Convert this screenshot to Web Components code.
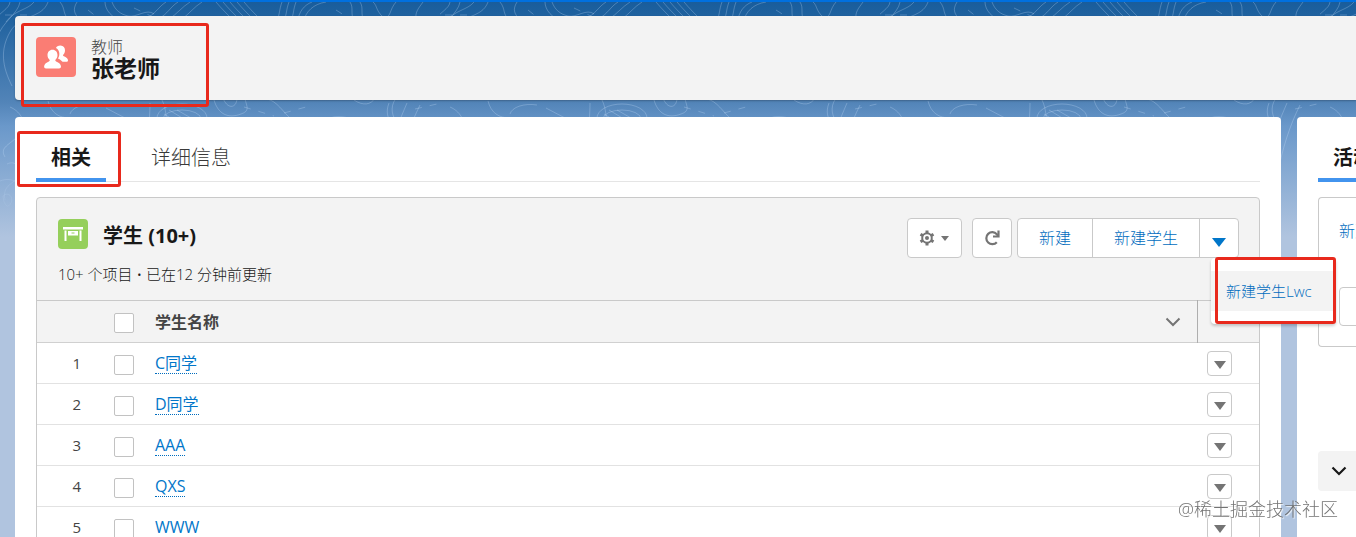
<!DOCTYPE html>
<html lang="zh-CN">
    <head>
        <meta charset="utf-8" />
        <meta name="viewport" content="width=device-width, initial-scale=1" />
        <title>张老师 | 教师</title>
        <style type="text/css">
            html,
            body {
                height: 100%;
                margin: 0;
                overflow: hidden;
            }
            body {
                color: #181818;
                font-family: "Open Sans", "Noto Sans CJK SC", sans-serif;
                font-size: 16px;
                line-height: 24px;
            }
        </style>
    </head>
    <body>
        <record-page>
            <record-header slot="header" type="教师" name="张老师"></record-header>
            <record-panel>
                <tab-bar slot="tabs">
                    <tab-item selected marked>相关</tab-item>
                    <tab-item>详细信息</tab-item>
                </tab-bar>
                <related-list>
                    <span slot="title">学生 (10+)</span>
                    <span slot="status">10+ 个项目 • 已在12 分钟前更新</span>
                    <list-actions slot="actions"></list-actions>
                    <student-table></student-table>
                </related-list>
            </record-panel>
            <record-panel slot="side" clipped>
                <tab-bar slot="tabs">
                    <tab-item selected>活动</tab-item>
                </tab-bar>
                <activity-box></activity-box>
            </record-panel>
        </record-page>

        <template id="page-template">
            <style>
                :host {
                    background: linear-gradient(#195d9c 0, #20629f 16px, #5284b8 100px, #6a98ca 124px, #b0c4df 235px);
                    border-top: 2px solid #0070e0;
                    box-sizing: border-box;
                    display: block;
                    height: 100%;
                    overflow: hidden;
                    padding: 14px 0 0 15px;
                    position: relative;
                }
                .texture {
                    height: 240px;
                    left: 0;
                    position: absolute;
                    top: 0;
                    width: 100%;
                }
                .content {
                    display: grid;
                    gap: 17px 16px;
                    grid-template-columns: minmax(0, 1fr) 59px;
                    position: relative;
                }
                .header {
                    grid-column: 1 / -1;
                }
                .watermark {
                    bottom: 16px;
                    color: rgba(100, 100, 100, 0.9);
                    font-size: 18px;
                    font-weight: 300;
                    pointer-events: none;
                    position: fixed;
                    right: 18px;
                    text-shadow: 1px 1px 1px #fff;
                }
            </style>
            <svg class="texture" aria-hidden="true">
                <defs>
                    <linearGradient id="fade" x2="0" y2="1">
                        <stop offset="0" stop-color="#fff" />
                        <stop offset=".6" stop-color="#fff" />
                        <stop offset="1" stop-color="#000" />
                    </linearGradient>
                    <mask id="mask"><rect width="100%" height="240" fill="url(#fade)" /></mask>
                    <pattern id="contours" width="440" height="240" patternUnits="userSpaceOnUse">
                        <g fill="none" stroke="#cfe4ff" stroke-opacity=".27">
                            <path d="M10 0C9 7 0 10-5 18M20 0C18 12 2 20-3 36M48 0C42 17 20 12 10 30C0 48 2 64 12 84M34 0C28 8 14 8 6 20" />
                            <path d="M60 0c6 7 2 13 10 18M77 0c-5 8-2 12 2 17M112 0c3 8 8 12 16 14s19-8 26-2M105 0c0 8 7 16 17 19" />
                            <path d="M166 0c-8 5-10 12-21 17M178 0c-8 5-10 12-20 17M190 0c-8 5-13 12-21 17M202 0c-8 5-13 12-20 17" />
                            <path d="M216 0c5 6 11 12 17 18M223 0c5 6 11 12 17 18M230 0c5 6 11 12 17 18M237 0c5 6 11 12 17 18M244 0c5 6 11 12 17 18" />
                            <path d="M282 0c-3 8-2 12-5 18M289 0c-3 8-2 12-5 18M296 0c-3 8-2 12-5 18M312 0c-8 3-13 10-14 18M326 0c-13 2-20 10-22 18" />
                            <path d="M350 0c4 6 0 12 4 18M360 0c4 6 0 12 4 18M373 0c5 4 2 10 14 18M396 0c-7 8-4 14-13 18M423 0c-5 7-8 10-7 18" />
                            <path d="M48 99c3 12 11 17 22 17M70 112c2-7 14-11 27-9M106 106l19 10M150 101c0 14-2 19 2 24M162 98c5 10 3 18 6 24M214 98c4 14 14 19 27 14 9-3 6-7 4-15M223 96c4 11 13 11 14 1" />
                            <path d="M267 97c10 2 16 13 24 20M324 119c7-6 21-5 32-1M354 98c9 6 17 5 21-2M398 94c-8 8-7 18-2 25" />
                            <ellipse cx="182" cy="116" rx="25" ry="14" />
                            <ellipse cx="182" cy="117" rx="19" ry="9" />
                            <path d="M164 112l16 10M169 108l20 12M177 108l14 8" />
                            <path d="M10 105c12 5 18 18 9 28s-20 12-14 22M7 162c8-4 15 3 11 12s-16 8-13 24M-2 180c5-3 14-4 19 1M3 194c5-5 11 1 8 7s-7 3-8-7" />
                            <path d="M389 101c-7 18 10 22 3 39s-19 23-18 42M407 101c-8 19-13 30-17 45s-9 20-7 40M420 103c-10 20-18 44-23 72s-8 26-8 42" />
                            <path stroke-dasharray="7 8" d="M5 13h30M88 8l10 8M134 6l23 11M244 105l30 9M284 111l22-6M336 8l14 9M415 107l22-5" />
                        </g>
                    </pattern>
                </defs>
                <rect width="100%" height="240" fill="url(#contours)" mask="url(#mask)" />
            </svg>
            <div class="content">
                <div class="header"><slot name="header"></slot></div>
                <slot></slot>
                <slot name="side"></slot>
            </div>
            <div class="watermark">@稀土掘金技术社区</div>
        </template>

        <template id="header-template">
            <style>
                :host {
                    background: #f3f3f3;
                    border-radius: 4px 0 0 4px;
                    box-shadow: 0 1px 2px rgba(0, 0, 0, 0.25);
                    box-sizing: border-box;
                    display: flex;
                    gap: 15px;
                    min-height: 84px;
                    padding: 21px 21px 19px;
                    position: relative;
                }
                .icon {
                    background: #fa7d74;
                    border-radius: 4px;
                    flex: none;
                    height: 40px;
                    width: 40px;
                }
                .type {
                    color: #444;
                    font-weight: 300;
                    line-height: 20px;
                }
                h1 {
                    font-size: 23px;
                    line-height: 22px;
                    margin: 0;
                }
                .mark {
                    border: 3px solid #e8291c;
                    border-radius: 3px;
                    box-sizing: border-box;
                    height: 84px;
                    left: 6px;
                    pointer-events: none;
                    position: absolute;
                    top: 7px;
                    width: 188px;
                }
            </style>
            <svg class="icon" viewBox="0 0 40 40" fill="#fff" aria-hidden="true">
                <path d="M24.500 8.500c3 0 4.500 2.200 4.500 5 0 1.800-.8 3.300-1.800 4.200-.4.700 0 1.200.7 1.500 2.200.9 4.100 2.100 4.100 4.100 0 1-.7 1.500-1.600 1.500h-3.900c-1.300-1.700-3.200-2.800-4.500-3.400 1.200-1.700 1.600-3.800 1.200-5.800-.4-2.100-1.600-3.700-3.200-4.500.4-1.700 2-2.600 4.500-2.600z" />
                <path d="M16.500 12.700c3.100 0 5 2.400 5 5.400 0 2-.8 3.600-2 4.700-.5.700-.1 1.300.6 1.600 2.800 1.100 4.900 2.500 4.900 5.200 0 1.300-.8 2-1.900 2H10c-1.200 0-1.900-.7-1.900-2 0-2.700 2.100-4.100 4.800-5.200.8-.3 1.100-.9.600-1.600-1.200-1.100-2-2.700-2-4.700 0-3 1.900-5.400 5-5.400z" />
            </svg>
            <div>
                <div class="type"></div>
                <h1></h1>
            </div>
            <div class="mark"></div>
        </template>

        <template id="panel-template">
            <style>
                :host {
                    background: #fff;
                    border-radius: 4px;
                    box-sizing: border-box;
                    display: block;
                    min-height: calc(100vh - 117px);
                    min-width: 0;
                    padding: 16px 21px;
                }
                :host([clipped]) {
                    border-radius: 4px 0 0 4px;
                    overflow: hidden;
                    padding-right: 0;
                }
            </style>
            <slot name="tabs"></slot>
            <slot></slot>
        </template>

        <template id="tab-bar-template">
            <style>
                :host {
                    border-bottom: 1px solid #e5e5e5;
                    display: flex;
                    gap: 30px;
                    height: 48px;
                    margin-bottom: 15px;
                }
            </style>
            <slot></slot>
        </template>

        <template id="tab-item-template">
            <style>
                :host {
                    display: block;
                    flex: none;
                    position: relative;
                }
                button {
                    background: none;
                    border: 0;
                    border-bottom: 4px solid transparent;
                    box-sizing: border-box;
                    color: #3a3a3a;
                    cursor: pointer;
                    font: inherit;
                    font-size: 20px;
                    font-weight: 300;
                    height: 49px;
                    padding: 5px 15px 0;
                }
                :host([selected]) button {
                    border-color: #4294ee;
                    color: #181818;
                    font-weight: 700;
                }
                .mark {
                    display: none;
                }
                :host([marked]) .mark {
                    border: 3px solid #e8291c;
                    border-radius: 3px;
                    bottom: -6px;
                    display: block;
                    left: -19px;
                    pointer-events: none;
                    position: absolute;
                    right: -15px;
                    top: -2px;
                }
            </style>
            <button type="button"><slot></slot></button>
            <div class="mark"></div>
        </template>

        <template id="related-list-template">
            <style>
                :host {
                    background: #f3f3f3;
                    border: 1px solid #c9c9c9;
                    border-radius: 4px;
                    display: block;
                }
                header {
                    display: grid;
                    gap: 12px;
                    grid-template-columns: 1fr auto;
                    padding: 20px 20px 14px 21px;
                }
                .heading {
                    align-items: center;
                    display: flex;
                    gap: 15px;
                    height: 32px;
                }
                .icon {
                    background: #95cf5b;
                    border-radius: 4px;
                    height: 30px;
                    width: 30px;
                }
                h2 {
                    font-size: 20px;
                    margin: 4px 0 0;
                }
                .status {
                    font-size: 15px;
                    font-weight: 300;
                }
                .actions {
                    grid-column: 2;
                    grid-row: 1 / 3;
                }
            </style>
            <header>
                <div class="heading">
                    <svg class="icon" viewBox="0 0 30 30" fill="#fff" aria-hidden="true">
                        <path d="M5 8h20v2.500H5zM6.500 11.500h2V22h-2zM21.500 11.500h2V22h-2z" />
                        <path fill-rule="evenodd" d="M10 12h10v4.500H10zM13.500 13.500v1h3v-1z" />
                    </svg>
                    <h2><slot name="title"></slot></h2>
                </div>
                <div class="status"><slot name="status"></slot></div>
                <div class="actions"><slot name="actions"></slot></div>
            </header>
            <slot></slot>
        </template>

        <template id="actions-template">
            <style>
                :host {
                    display: flex;
                    gap: 10px;
                }
                button {
                    align-items: center;
                    background: #fff;
                    border: 1px solid #c9c9c9;
                    border-radius: 4px;
                    box-sizing: border-box;
                    color: #006cbe;
                    cursor: pointer;
                    display: flex;
                    font: inherit;
                    font-weight: 300;
                    height: 40px;
                    justify-content: center;
                    padding: 0 21px;
                }
                .settings {
                    gap: 6px;
                    padding: 0;
                    width: 55px;
                }
                .square {
                    padding: 0;
                    width: 40px;
                }
                .group {
                    display: flex;
                    margin-left: -5px;
                    position: relative;
                }
                .group > button {
                    border-radius: 0;
                    margin-left: -1px;
                }
                .group > button:first-child {
                    border-radius: 4px 0 0 4px;
                    margin-left: 0;
                }
                .group > .square {
                    border-radius: 0 4px 4px 0;
                    padding-top: 8px;
                }
                .menu {
                    background: #fff;
                    border-radius: 4px;
                    box-shadow: 0 2px 3px rgba(0, 0, 0, 0.2);
                    box-sizing: border-box;
                    height: 66px;
                    padding: 13px 0;
                    position: absolute;
                    right: -97px;
                    top: 40px;
                    width: 125px;
                    z-index: 1;
                }
                .menu a {
                    background: #f3f3f3;
                    color: #006cbe;
                    display: block;
                    font-size: 15px;
                    font-weight: 300;
                    line-height: 40px;
                    padding-left: 15px;
                    text-decoration: none;
                    white-space: nowrap;
                }
                .mark {
                    border: 3px solid #e8291c;
                    border-radius: 3px;
                    bottom: 0;
                    left: 4px;
                    pointer-events: none;
                    position: absolute;
                    right: 0;
                    top: -1px;
                }
            </style>
            <button class="settings" type="button" aria-label="设置">
                <svg width="16" height="18" viewBox="0 0 16 18" fill="none" stroke="#747474" aria-hidden="true">
                    <circle cx="8" cy="9" r="4.800" stroke-width="2" />
                    <path stroke-width="3" d="M8 4V1.500M8 14v2.500M3.700 6.500L1.500 5.200M12.300 6.500l2.200-1.300M3.700 11.500l-2.200 1.300M12.300 11.500l2.200 1.300" />
                    <circle cx="8" cy="9" r="2" fill="#747474" stroke="none" />
                </svg>
                <svg width="8" height="5" viewBox="0 0 8 5" fill="#747474" aria-hidden="true"><path d="M0 0h8L4 5z" /></svg>
            </button>
            <button class="square" type="button" aria-label="刷新">
                <svg width="16" height="16" viewBox="0 0 16 16" fill="none" stroke="#747474" stroke-width="2.200" aria-hidden="true">
                    <path d="M12.800 12.200A6 6 0 1 1 12.800 4.200L14 6" />
                    <path d="M14.500.500v6H9" />
                </svg>
            </button>
            <div class="group">
                <button type="button">新建</button>
                <button type="button">新建学生</button>
                <button class="square" type="button" aria-label="更多操作">
                    <svg width="14" height="9" viewBox="0 0 14 9" fill="#0176c9" aria-hidden="true"><path d="M0 0h14L7 9z" /></svg>
                </button>
                <div class="menu">
                    <a href="#">新建学生Lwc</a>
                    <div class="mark"></div>
                </div>
            </div>
        </template>

        <template id="table-template">
            <style>
                :host {
                    display: block;
                }
                table {
                    border-collapse: collapse;
                    table-layout: fixed;
                    width: 100%;
                }
                th,
                td {
                    box-sizing: border-box;
                    padding: 0;
                    text-align: left;
                }
                thead tr {
                    border-bottom: 1px solid #d0d0d0;
                    border-top: 1px solid #c9c9c9;
                    height: 42px;
                }
                tbody tr {
                    background: #fff;
                    border-bottom: 1px solid #e2e2e2;
                    height: 41px;
                }
                .number {
                    color: #444;
                    font-size: 15px;
                    font-weight: 400;
                    padding-right: 20px;
                    text-align: right;
                    width: 64px;
                }
                .select {
                    text-align: center;
                    width: 46px;
                }
                .name {
                    color: #444;
                    padding: 0 16px 0 8px;
                }
                .name div {
                    align-items: center;
                    display: flex;
                    justify-content: space-between;
                }
                .menu {
                    padding-left: 10px;
                    width: 62px;
                }
                thead .menu {
                    border-left: 1px solid #aeaeae;
                }
                input {
                    appearance: none;
                    background: #fff;
                    border: 1px solid #c2c2c2;
                    border-radius: 2px;
                    box-sizing: border-box;
                    display: block;
                    height: 20px;
                    margin: 3px auto 0;
                    width: 20px;
                }
                a {
                    border-bottom: 1px dotted #006cbe;
                    color: #0176c9;
                    display: inline-block;
                    font-weight: 400;
                    line-height: 20px;
                    text-decoration: none;
                }
                button {
                    align-items: center;
                    background: #fff;
                    border: 1px solid #c9c9c9;
                    border-radius: 4px;
                    box-sizing: border-box;
                    cursor: pointer;
                    display: flex;
                    height: 25px;
                    justify-content: center;
                    padding: 3px 0 0;
                    width: 25px;
                }
            </style>
            <table>
                <thead>
                    <tr>
                        <th class="number"></th>
                        <th class="select"><input type="checkbox" aria-label="全选" /></th>
                        <th class="name">
                            <div>
                                学生名称
                                <svg width="16" height="10" viewBox="0 0 16 10" fill="none" stroke="#747474" stroke-width="2" aria-hidden="true"><path d="M1.500 1.500L8 8l6.500-6.500" /></svg>
                            </div>
                        </th>
                        <th class="menu"></th>
                    </tr>
                </thead>
                <tbody></tbody>
            </table>
        </template>

        <template id="row-template">
            <tr>
                <td class="number"></td>
                <td class="select"><input type="checkbox" /></td>
                <td class="name"><a href="#"></a></td>
                <td class="menu">
                    <button type="button" aria-label="显示操作">
                        <svg width="12" height="8" viewBox="0 0 12 8" fill="#747474" aria-hidden="true"><path d="M0 0h12L6 8z" /></svg>
                    </button>
                </td>
            </tr>
        </template>

        <template id="activity-template">
            <style>
                :host {
                    display: block;
                    white-space: nowrap;
                }
                .composer {
                    border: 1px solid #c9c9c9;
                    border-radius: 4px 0 0 4px;
                    border-right: 0;
                    box-sizing: border-box;
                    display: grid;
                    gap: 44px;
                    height: 150px;
                    padding: 21px 0 20px 20px;
                }
                button {
                    background: none;
                    border: 0;
                    color: #006cbe;
                    font: inherit;
                    font-weight: 300;
                    padding: 0;
                    text-align: left;
                }
                input {
                    border: 1px solid #c9c9c9;
                    border-radius: 4px;
                    box-sizing: border-box;
                    height: 39px;
                    width: 200px;
                }
                .toggle {
                    background: #f3f3f3;
                    border-radius: 4px 0 0 4px;
                    height: 40px;
                    margin-top: 104px;
                    padding-left: 13px;
                    width: 100%;
                }
                .toggle svg {
                    display: block;
                }
            </style>
            <div class="composer">
                <button type="button">新建</button>
                <input type="text" aria-label="活动" />
            </div>
            <button class="toggle" type="button" aria-label="展开">
                <svg width="16" height="10" viewBox="0 0 16 10" fill="none" stroke="#181818" stroke-width="2.200" aria-hidden="true"><path d="M1.500 1.500L8 8l6.500-6.500" /></svg>
            </button>
        </template>

        <script type="text/javascript">
            class TemplateElement extends HTMLElement {
                constructor() {
                    super();
                    const template = document.getElementById(
                        this.constructor.template
                    );
                    this.attachShadow({ mode: "open" }).appendChild(
                        document.importNode(template.content, true)
                    );
                }
            }

            class RecordPage extends TemplateElement {
                static template = "page-template";
            }

            class RecordHeader extends TemplateElement {
                static template = "header-template";
                connectedCallback() {
                    this.shadowRoot.querySelector(".type").textContent =
                        this.getAttribute("type");
                    this.shadowRoot.querySelector("h1").textContent =
                        this.getAttribute("name");
                }
            }

            class RecordPanel extends TemplateElement {
                static template = "panel-template";
            }

            class TabBar extends TemplateElement {
                static template = "tab-bar-template";
            }

            class TabItem extends TemplateElement {
                static template = "tab-item-template";
            }

            class RelatedList extends TemplateElement {
                static template = "related-list-template";
            }

            class ListActions extends TemplateElement {
                static template = "actions-template";
            }

            class ActivityBox extends TemplateElement {
                static template = "activity-template";
            }

            const students = ["C同学", "D同学", "AAA", "QXS", "WWW"];

            class StudentTable extends TemplateElement {
                static template = "table-template";
                connectedCallback() {
                    const body = this.shadowRoot.querySelector("tbody");
                    const row = document.getElementById("row-template");
                    body.innerHTML = "";
                    students.forEach((name, index) => {
                        const instance = document.importNode(row.content, true);
                        instance.querySelector(".number").textContent =
                            index + 1;
                        instance.querySelector("a").textContent = name;
                        instance
                            .querySelector("input")
                            .setAttribute("aria-label", name);
                        body.appendChild(instance);
                    });
                }
            }

            customElements.define("record-page", RecordPage);
            customElements.define("record-header", RecordHeader);
            customElements.define("record-panel", RecordPanel);
            customElements.define("tab-bar", TabBar);
            customElements.define("tab-item", TabItem);
            customElements.define("related-list", RelatedList);
            customElements.define("list-actions", ListActions);
            customElements.define("student-table", StudentTable);
            customElements.define("activity-box", ActivityBox);
        </script>
    </body>
</html>
